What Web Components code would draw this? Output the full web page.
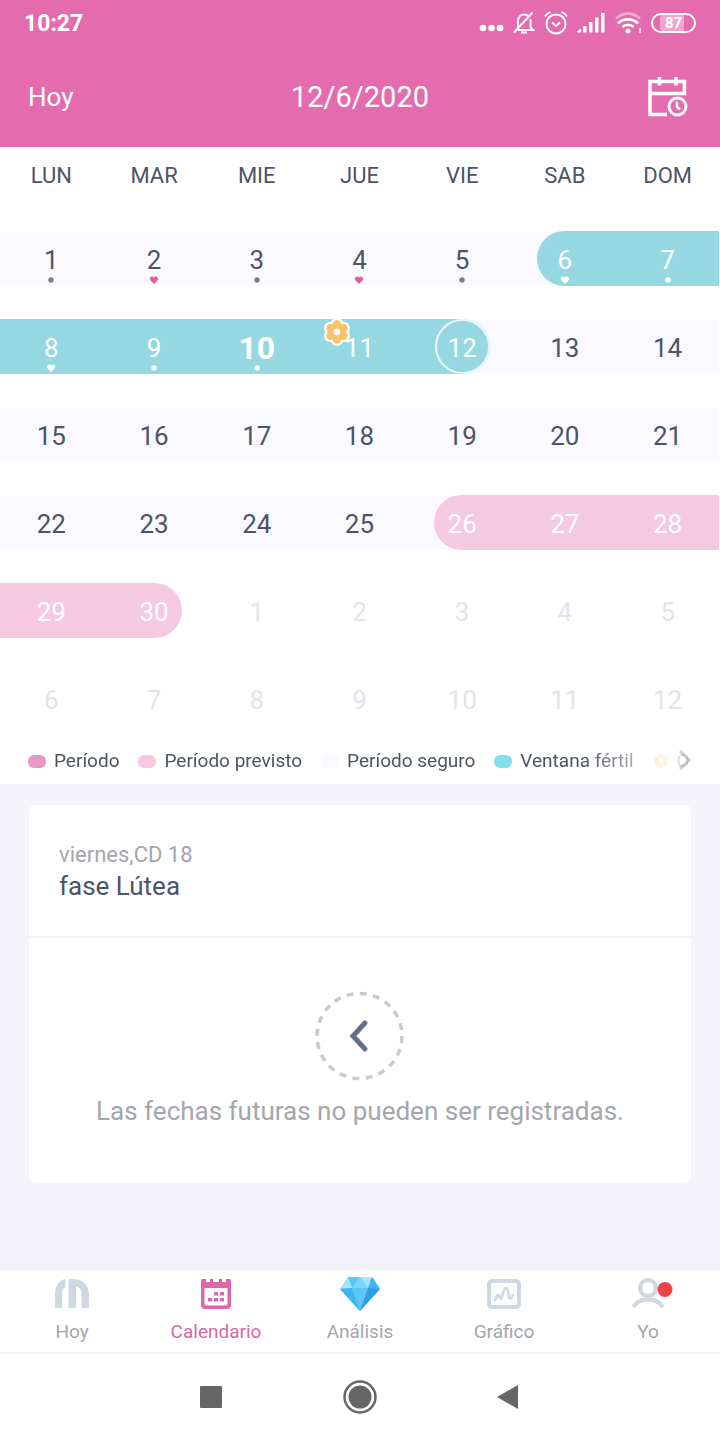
<!DOCTYPE html>
<html lang="es">
<head>
<meta charset="utf-8">
<meta name="viewport" content="width=device-width, initial-scale=1">
<title>Calendario</title>
<style>
  :root {
    --pink: #e46bad;
    --pink-soft: #f6c9e3;
    --teal: #95d8e1;
    --safe: #faf9ff;
    --ink: #4d5465;
    --muted: #a3a6ab;
    --page: #f3f3f9;
  }
  body {
    margin: 0;
    min-height: 100vh;
    font-family: Roboto, "Liberation Sans", sans-serif;
    color: var(--ink);
    background: var(--page);
  }
</style>
</head>
<body>
<cycle-app></cycle-app>

<script>
  // Shared base: every element renders its own template once
  class BaseElement extends HTMLElement {
    constructor() {
      super();
      this.attachShadow({ mode: 'open' });
    }

    connectedCallback() {
      this.shadowRoot.innerHTML = this.template();
    }
  }

  class StatusBar extends BaseElement {
    template() {
      return `
        <style>
          :host {
            display: flex;
            align-items: center;
            justify-content: space-between;
            height: 46px;
            padding: 0 24px;
            color: #fff;
            background: var(--pink);
          }
          time {
            font-size: 23px;
            font-weight: 700;
          }
          .icons {
            display: flex;
            align-items: center;
            gap: 9px;
          }
          svg {
            display: block;
            fill: none;
            stroke: #fff;
            stroke-width: 2;
          }
          .battery {
            box-sizing: border-box;
            width: 45px;
            height: 20px;
            border: 2px solid #fff;
            border-radius: 10px;
            padding: 0 7px;
            font-size: 15px;
            font-weight: 700;
            line-height: 16px;
            text-align: center;
            background: linear-gradient(90deg, #f0a6cf 88%, transparent 88%) content-box;
          }
        </style>
        <time>10:27</time>
        <div class="icons">
          <svg width="25" height="24" viewBox="0 0 25 24" style="fill:#fff;stroke:none">
            <circle cx="4" cy="17" r="3.3"/><circle cx="12.5" cy="17" r="3.3"/><circle cx="21" cy="17" r="3.3"/>
          </svg>
          <svg width="22" height="24" viewBox="0 0 22 24">
            <path d="M5 17V10c0-4 3-6.500 6-6.500 2 0 3.500.6 4.500 1.800M17.500 8v8l2.500 3H5M8 21.500h6M1 21.500 19.500 1.500"/>
          </svg>
          <svg width="24" height="24" viewBox="0 0 24 24">
            <circle cx="12" cy="13" r="9.5"/>
            <path d="M1 5.500C2 3.500 4 2 6.500 1M23 5.500C22 3.500 20 2 17.500 1M8 11.500l4 3.500 4-3.500"/>
          </svg>
          <svg width="28" height="24" viewBox="0 0 28 24" style="fill:#fff;stroke:none">
            <path d="M0 21.500v-1l4-3v4zM6 15h3.500v6.500H6zM12 11h3.500v10.500H12zM18 6.500h3.500v15H18zM24 2h3.500v19.500H24z"/>
          </svg>
          <svg width="28" height="24" viewBox="0 0 28 24" style="stroke-width:2.6">
            <path opacity=".45" d="M2 7.500C9 1 19 1 26 7.500"/>
            <path d="M4 12.500c5-5.500 15-5.500 20 0M8.500 16c3-3 8-3 11 0"/>
            <circle cx="14" cy="20" r="2.5" fill="#fff" stroke="none"/>
            <path opacity=".7" stroke-width="2" d="M26 17v5"/>
          </svg>
          <div class="battery">87</div>
        </div>
      `;
    }
  }
  customElements.define('status-bar', StatusBar);

  class AppHeader extends BaseElement {
    template() {
      return `
        <style>
          :host {
            display: grid;
            grid-template-columns: 1fr auto 1fr;
            align-items: center;
            height: 101px;
            padding: 0 28px;
            color: #fff;
            background: var(--pink);
          }
          button {
            padding: 0;
            border: 0;
            background: none;
            color: inherit;
            font: inherit;
            font-size: 26px;
            cursor: pointer;
          }
          .today { justify-self: start; }
          .log { justify-self: end; margin-right: 4px; }
          h1 {
            margin: 0;
            font-size: 29px;
            font-weight: 400;
          }
          svg {
            display: block;
            fill: none;
            stroke: #fff;
            stroke-width: 3.5;
          }
        </style>
        <button class="today">Hoy</button>
        <h1><slot></slot></h1>
        <button class="log" aria-label="Registro">
          <svg width="40" height="40" viewBox="0 0 40 40">
            <path d="M19 37.500H2V4.500h34.500v12H2M11.500 0v8.500M28 0v8.500"/>
            <circle cx="29.5" cy="29.5" r="8.5" stroke-width="3"/>
            <path d="M29 24.500v5.500l3 2.500" stroke-width="2.5"/>
          </svg>
        </button>
      `;
    }
  }
  customElements.define('app-header', AppHeader);

  const FLOWER = `
    <g fill="#f6c56c">
      <circle cx="12" cy="5" r="4"/><circle cx="18" cy="8.5" r="4"/><circle cx="18" cy="15.5" r="4"/>
      <circle cx="12" cy="19" r="4"/><circle cx="6" cy="15.5" r="4"/><circle cx="6" cy="8.5" r="4"/>
      <circle cx="12" cy="12" r="7"/>
    </g>
    <circle cx="12" cy="12" r="3" fill="#fff"/>`;

  // phase: safe | fertile | predicted | next ; edge: start | end
  class CalendarDay extends BaseElement {
    template() {
      const mark = this.getAttribute('mark');
      const marks = {
        dot: '<svg viewBox="0 0 10 8"><circle cx="5" cy="4" r="2.7"/></svg>',
        heart: '<svg viewBox="0 0 10 8"><path d="M5 8 1.300 4.200C-.2 2 2.600-1 5 1.500 7.400-1 10.200 2 8.700 4.200z"/></svg>',
      };
      return `
        <style>
          :host { display: block; }
          button {
            position: relative;
            display: grid;
            grid-template-rows: 45px 8px;
            justify-items: center;
            width: 100%;
            height: 55px;
            padding: 0;
            border: 0;
            background: none;
            color: inherit;
            font: inherit;
            font-size: 26px;
            line-height: 58px;
            cursor: pointer;
          }
          .band {
            position: absolute;
            inset: 0;
          }
          .safe { inset: 1px 0; background: var(--safe); }
          .fertile { background: var(--teal); }
          .predicted { background: var(--pink-soft); }
          :host([edge="start"]) .fill {
            left: calc(50% - 28px);
            border-radius: 28px 0 0 28px;
          }
          :host([edge="end"]) .fill {
            right: calc(50% - 28px);
            border-radius: 0 28px 28px 0;
          }
          .number { position: relative; }
          .mark {
            position: relative;
            height: 8px;
          }
          .mark svg {
            display: block;
            width: 10px;
            height: 8px;
            fill: #7d7f88;
          }
          .mark.heart svg { fill: #e0609f; }
          :host([phase="fertile"]) button,
          :host([phase="predicted"]) button { color: #fff; }
          :host([phase="fertile"]) .mark svg { fill: #fff; }
          :host([phase="next"]) button { color: #e1e4ea; }
          :host([today]) .number { font-size: 32px; font-weight: 700; }
          .ring {
            position: absolute;
            inset: 0;
            margin: 0 auto;
            box-sizing: border-box;
            width: 55px;
            border: 2px solid #e6f8fa;
            border-radius: 50%;
          }
          .flower {
            position: absolute;
            top: 0;
            left: calc(50% - 36px);
          }
        </style>
        <button>
          ${this.bands()}
          <span class="number"><slot></slot></span>
          ${mark ? `<span class="mark ${mark}">${marks[mark]}</span>` : ''}
          ${this.hasAttribute('selected') ? '<span class="ring"></span>' : ''}
          ${this.hasAttribute('ovulation') ? `
            <svg class="flower" width="28" height="28" viewBox="-1 0 26 26">
              <g stroke="#fff" stroke-width="4">${FLOWER}</g>${FLOWER}
            </svg>` : ''}
        </button>
      `;
    }

    bands() {
      const phase = this.getAttribute('phase');
      if (phase === 'next') return '';
      if (phase === 'safe') return '<span class="band safe"></span>';
      const under = this.hasAttribute('edge') && !this.hasAttribute('last')
        ? '<span class="band safe"></span>' : '';
      return `${under}<span class="band fill ${phase}"></span>`;
    }
  }
  customElements.define('calendar-day', CalendarDay);

  class MonthCalendar extends BaseElement {
    template() {
      return `
        <style>
          :host {
            display: block;
            padding: 0 1px 12px 0;
            background: #fff;
          }
          table {
            width: 100%;
            table-layout: fixed;
            border-collapse: collapse;
          }
          th {
            padding: 17px 0 10px;
            font-size: 22px;
            font-weight: 400;
            line-height: 24px;
          }
          td { padding: 33px 0 0; }
        </style>
        <table>
          <thead>
            <tr>${['LUN', 'MAR', 'MIE', 'JUE', 'VIE', 'SAB', 'DOM'].map((d) => `<th scope="col">${d}</th>`).join('')}</tr>
          </thead>
          <tbody>${this.weeks()}</tbody>
        </table>
      `;
    }

    weeks() {
      const marks = { 1: 'dot', 2: 'heart', 3: 'dot', 4: 'heart', 5: 'dot', 6: 'heart', 7: 'dot', 8: 'heart', 9: 'dot', 10: 'dot' };
      const edges = { 6: 'start', 12: 'end', 26: 'start', 30: 'end' };
      const flags = { 10: 'today', 11: 'ovulation', 12: 'selected', 30: 'last' };
      let html = '';
      for (let i = 1; i <= 42; i++) {
        let phase = 'safe';
        if (i >= 6 && i <= 12) phase = 'fertile';
        if (i >= 26) phase = 'predicted';
        if (i > 30) phase = 'next';
        if (i % 7 === 1) html += '<tr>';
        html += `<td><calendar-day phase="${phase}"
          ${marks[i] ? `mark="${marks[i]}"` : ''}
          ${edges[i] ? `edge="${edges[i]}"` : ''}
          ${flags[i] || ''}>${i > 30 ? i - 30 : i}</calendar-day></td>`;
        if (i % 7 === 0) html += '</tr>';
      }
      return html;
    }
  }
  customElements.define('month-calendar', MonthCalendar);

  class PhaseLegend extends BaseElement {
    template() {
      return `
        <style>
          :host {
            display: flex;
            align-items: center;
            height: 46px;
            padding: 0 28px;
            background: #fff;
          }
          ul {
            display: flex;
            flex: 1;
            gap: 19px;
            min-width: 0;
            margin: 0;
            padding: 0;
            overflow: hidden;
            list-style: none;
            font-size: 19px;
            line-height: 24px;
            white-space: nowrap;
            -webkit-mask-image: linear-gradient(90deg, #000 calc(100% - 110px), rgba(0,0,0,.2) calc(100% - 30px));
            mask-image: linear-gradient(90deg, #000 calc(100% - 110px), rgba(0,0,0,.2) calc(100% - 30px));
          }
          li {
            display: flex;
            align-items: center;
            gap: 8px;
            flex: none;
          }
          i {
            width: 18px;
            height: 13px;
            border-radius: 6px;
          }
          button {
            display: block;
            flex: none;
            width: 14px;
            margin-left: -14px;
            padding: 0;
            border: 0;
            background: none;
          }
          svg { display: block; }
        </style>
        <ul>
          <li><i style="background:#e997c4"></i>Período</li>
          <li><i style="background:var(--pink-soft)"></i>Período previsto</li>
          <li><i style="background:var(--safe)"></i>Período seguro</li>
          <li><i style="background:#82dfec"></i>Ventana fértil</li>
          <li aria-label="Ovulación"><svg width="16" height="16" viewBox="0 0 24 24">${FLOWER}</svg>O</li>
        </ul>
        <button aria-label="Más">
          <svg width="14" height="22" viewBox="0 0 14 22" fill="none" stroke="#cfd0d3" stroke-width="3">
            <path d="m2 1 9 9-9 9"/>
          </svg>
        </button>
      `;
    }
  }
  customElements.define('phase-legend', PhaseLegend);

  class DayCard extends BaseElement {
    template() {
      return `
        <style>
          :host {
            display: block;
            margin: 21px 29px;
            border-radius: 6px;
            background: #fff;
          }
          header {
            padding: 35px 30px 34px;
            border-bottom: 2px solid #f1f1f5;
          }
          p { margin: 0; }
          .day {
            color: var(--muted);
            font-size: 22px;
            line-height: 30px;
          }
          .phase {
            font-size: 26px;
            line-height: 32px;
          }
          .body {
            display: flex;
            flex-direction: column;
            align-items: center;
            gap: 14px;
            padding: 53px 16px 56px;
            color: var(--muted);
            font-size: 26px;
            line-height: 32px;
            text-align: center;
          }
          button {
            padding: 0;
            border: 0;
            background: none;
          }
          svg { display: block; fill: none; }
        </style>
        <header>
          <p class="day"><slot name="day"></slot></p>
          <p class="phase"><slot name="phase"></slot></p>
        </header>
        <div class="body">
          <button aria-label="Volver a hoy">
            <svg width="90" height="90" viewBox="0 0 90 90">
              <circle cx="44.5" cy="45" r="42.5" stroke="#c9cacd" stroke-width="3.5" stroke-dasharray="7 6.35"/>
              <path d="M50 32 38 45l12 13" stroke="#64708a" stroke-width="5" stroke-linecap="round"/>
            </svg>
          </button>
          <p><slot></slot></p>
        </div>
      `;
    }
  }
  customElements.define('day-card', DayCard);

  class TabItem extends BaseElement {
    template() {
      return `
        <style>
          :host { display: block; flex: 1; }
          a {
            display: flex;
            flex-direction: column;
            align-items: center;
            gap: 6px;
            padding: 5px 0 7px;
            color: var(--muted);
            font-size: 19px;
            line-height: 26px;
            text-decoration: none;
          }
          :host([active]) a { color: #d966a6; }
        </style>
        <a href="#"><slot name="icon"></slot><slot></slot></a>
      `;
    }
  }
  customElements.define('tab-item', TabItem);

  class TabBar extends BaseElement {
    template() {
      return `
        <style>
          :host {
            display: block;
            border-top: 5px solid #f1f2f5;
            border-bottom: 2px solid #f3f3f4;
            background: #fff;
          }
          nav { display: flex; }
          svg { display: block; overflow: visible; }
        </style>
        <nav>
          <tab-item>
            <svg slot="icon" width="36" height="38" viewBox="0 0 36 38" fill="#cfd7e0">
              <path d="M1 33V20C1 11 5 5 11.500 4v8C8.500 14 8 16 8 20v13zM14.500 4H19c9 0 16 6 16 15v14h-7.500V19c0-5-2-7-5.500-7v21h-7.500z"/>
            </svg>Hoy
          </tab-item>
          <tab-item active>
            <svg slot="icon" width="32" height="38" viewBox="0 0 32 38">
              <path fill="#df64a8" fill-rule="evenodd" d="M1 6c0-2 1-2 3-2h2v3h4V4h3v3h6V4h3v3h4V4h2c2 0 3 0 3 2v24c0 2-1 4-4 4H5c-3 0-4-2-4-4zM4.500 13v15c0 2 .5 2.500 2.500 2.500h18c2 0 2.500-.5 2.500-2.500V13z"/>
              <path fill="#df64a8" d="M14 17h4v3.500h-4zM20 17h4v3.500h-4zM8 23h4v3.500H8zM14 23h4v3.500h-4zM20 23h4v3.500h-4z"/>
            </svg>Calendario
          </tab-item>
          <tab-item>
            <svg slot="icon" width="42" height="38" viewBox="0 0 42 38">
              <path fill="#5ac8fa" d="M9 2h24l8 12-20 22L1 14z"/>
              <path fill="#a5e6fd" d="M9 2 1 14l12-1zM33 2l-12 0 8 11z"/>
              <path fill="#7ad6fb" d="M21 2 13 13h16z"/>
              <path fill="#3fb4f0" d="M33 2l8 12-12-1zM1 14l12-1 8 23z"/>
              <path fill="#5cc6f6" d="M13 13h16l-8 23z"/>
              <path fill="#2f9fe3" d="m29 13 12 1-20 22z"/>
            </svg>Análisis
          </tab-item>
          <tab-item>
            <svg slot="icon" width="36" height="38" viewBox="0 0 36 38" fill="none" stroke="#cfd7e0">
              <rect x="3" y="6" width="30" height="26" rx="3" stroke-width="4"/>
              <path stroke-width="2.5" stroke-linecap="round" stroke-linejoin="round" d="M9 25c2-1 1-5 3-5s2 4 3 4 2-11 5-11 2 11 4 11 2-3 3-4"/>
            </svg>Gráfico
          </tab-item>
          <tab-item>
            <svg slot="icon" width="36" height="38" viewBox="0 0 36 38" fill="none" stroke="#cfd7e0" stroke-width="4">
              <circle cx="18" cy="13" r="8"/>
              <path d="M3 32c7-10 23-10 30 0"/>
              <circle cx="35" cy="14.5" r="7.5" fill="#f04144" stroke="none"/>
            </svg>Yo
          </tab-item>
        </nav>
      `;
    }
  }
  customElements.define('tab-bar', TabBar);

  class SystemNav extends BaseElement {
    template() {
      return `
        <style>
          :host {
            display: flex;
            align-items: center;
            justify-content: center;
            gap: 115px;
            height: 86px;
            background: #fff;
          }
          button {
            padding: 0;
            border: 0;
            background: none;
          }
          svg { display: block; fill: #666; }
        </style>
        <button aria-label="Recientes">
          <svg width="34" height="34" viewBox="0 0 34 34"><rect x="6" y="6" width="22" height="22" rx="1"/></svg>
        </button>
        <button aria-label="Inicio">
          <svg width="34" height="34" viewBox="0 0 34 34">
            <circle cx="17" cy="17" r="15.5" fill="none" stroke="#666" stroke-width="2.5"/>
            <circle cx="17" cy="17" r="11.5"/>
          </svg>
        </button>
        <button aria-label="Atrás">
          <svg width="34" height="34" viewBox="0 0 34 34"><path d="M5 17 26 5v24z"/></svg>
        </button>
      `;
    }
  }
  customElements.define('system-nav', SystemNav);

  class CycleApp extends BaseElement {
    template() {
      return `
        <style>
          :host {
            display: flex;
            flex-direction: column;
            min-height: 100vh;
          }
          main { flex: 1; }
        </style>
        <status-bar></status-bar>
        <app-header>12/6/2020</app-header>
        <main>
          <month-calendar></month-calendar>
          <phase-legend></phase-legend>
          <day-card>
            <span slot="day">viernes,CD 18</span>
            <span slot="phase">fase Lútea</span>
            Las fechas futuras no pueden ser registradas.
          </day-card>
        </main>
        <tab-bar></tab-bar>
        <system-nav></system-nav>
      `;
    }
  }
  customElements.define('cycle-app', CycleApp);
</script>
</body>
</html>
